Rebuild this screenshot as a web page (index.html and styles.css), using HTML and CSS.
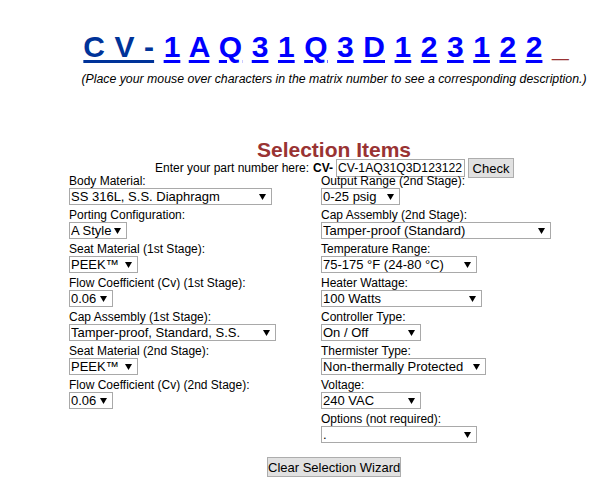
FILE: index.html
```html
<!DOCTYPE html>
<html>
<head>
<meta charset="utf-8">
<link rel="stylesheet" href="styles.css">
</head>
<body>
<div class="page">
  <div class="matrix"><a class="pre" href="#">C V -</a> <a href="#">1</a> <a href="#">A</a> <a href="#">Q</a> <a href="#">3</a> <a href="#">1</a> <a href="#">Q</a> <a href="#">3</a> <a href="#">D</a> <a href="#">1</a> <a href="#">2</a> <a href="#">3</a> <a href="#">1</a> <a href="#">2</a> <a href="#">2</a> <span class="blank">_</span></div>
  <p class="hint">(Place your mouse over characters in the matrix number to see a corresponding description.)</p>
  <h2 class="title">Selection Items</h2>
  <div class="pn">
    <span class="pn-label">Enter your part number here:</span>
    <b class="pn-pre">CV-</b>
    <input class="pn-input" type="text" value="CV-1AQ31Q3D123122">
    <button class="btn check">Check</button>
  </div>
  <div class="cols">
    <div class="col">
      <div class="field"><div class="lbl">Body Material:</div><select class="sel w202"><option>SS 316L, S.S. Diaphragm</option></select></div>
      <div class="field"><div class="lbl">Porting Configuration:</div><select class="sel w54"><option>A Style</option></select></div>
      <div class="field"><div class="lbl">Seat Material (1st Stage):</div><select class="sel w68"><option>PEEK™</option></select></div>
      <div class="field"><div class="lbl">Flow Coefficient (Cv) (1st Stage):</div><select class="sel w43"><option>0.06</option></select></div>
      <div class="field"><div class="lbl">Cap Assembly (1st Stage):</div><select class="sel w206"><option>Tamper-proof, Standard, S.S.</option></select></div>
      <div class="field"><div class="lbl">Seat Material (2nd Stage):</div><select class="sel w68"><option>PEEK™</option></select></div>
      <div class="field"><div class="lbl">Flow Coefficient (Cv) (2nd Stage):</div><select class="sel w43"><option>0.06</option></select></div>
    </div>
    <div class="col">
      <div class="field"><div class="lbl">Output Range (2nd Stage):</div><select class="sel w78"><option>0-25 psig</option></select></div>
      <div class="field"><div class="lbl">Cap Assembly (2nd Stage):</div><select class="sel w229"><option>Tamper-proof (Standard)</option></select></div>
      <div class="field"><div class="lbl">Temperature Range:</div><select class="sel w155"><option>75-175 °F (24-80 °C)</option></select></div>
      <div class="field"><div class="lbl">Heater Wattage:</div><select class="sel w160"><option>100 Watts</option></select></div>
      <div class="field"><div class="lbl">Controller Type:</div><select class="sel w99"><option>On / Off</option></select></div>
      <div class="field"><div class="lbl">Thermister Type:</div><select class="sel w164"><option>Non-thermally Protected</option></select></div>
      <div class="field"><div class="lbl">Voltage:</div><select class="sel w99"><option>240 VAC</option></select></div>
      <div class="field"><div class="lbl">Options (not required):</div><select class="sel w155"><option>.</option></select></div>
    </div>
  </div>
  <div class="clear"><button class="btn clear-btn">Clear Selection Wizard</button></div>
</div>
</body>
</html>
```

FILE: styles.css
```css
html, body {
  margin: 0;
  padding: 0;
  background: #ffffff;
  overflow: hidden;
}
body {
  font-family: "Liberation Sans", Arial, sans-serif;
  color: #000;
}
.page {
  width: 564px;
  margin: 0 0 0 52px;
  text-align: center;
}
.matrix {
  margin: 30px 0 0 0;
  padding-right: 16px;
  font-size: 30px;
  font-weight: bold;
  line-height: 34px;
  word-spacing: 1.2px;
  white-space: nowrap;
}
.matrix a {
  color: #0000ff;
  text-decoration: underline;
  text-decoration-thickness: 3px;
  text-underline-offset: 3px;
}
.matrix a.pre {
  color: #003399;
}
.matrix .blank {
  color: #993333;
}
.hint {
  margin: 8px 0 0 0;
  font-size: 12.3px;
  font-style: italic;
  line-height: 14px;
  white-space: nowrap;
}
.title {
  margin: 53px 0 0 0;
  font-size: 21px;
  line-height: 22px;
  font-weight: bold;
  color: #993333;
}
.pn {
  display: flex;
  justify-content: center;
  align-items: center;
  height: 14px;
  font-size: 12px;
  padding-left: 1px;
}
.pn-label {
  margin-right: 4px;
}
.pn-pre {
  margin-right: 3px;
}
.pn-input {
  box-sizing: border-box;
  width: 129px;
  height: 18px;
  margin: 0;
  padding: 0 1px;
  border: 1px solid #a9a9a9;
  font-family: "Liberation Sans", Arial, sans-serif;
  font-size: 12.2px;
  color: #000;
}
.btn {
  box-sizing: border-box;
  margin: 0;
  border: 1px solid #adadad;
  background: #e1e1e1;
  font-family: "Liberation Sans", Arial, sans-serif;
  font-size: 13px;
  color: #000;
  border-radius: 0;
  white-space: nowrap;
}
.check {
  width: 46px;
  height: 20px;
  margin-left: 3px;
  padding: 0;
}
.cols {
  display: grid;
  grid-template-columns: 252px 1fr;
  padding-left: 17px;
  margin-top: -1px;
  text-align: left;
}
.field {
  display: flex;
  flex-direction: column;
  align-items: flex-start;
  margin-bottom: 3px;
}
.lbl {
  font-size: 12px;
  line-height: 14px;
}
.sel {
  -webkit-appearance: none;
  appearance: none;
  box-sizing: border-box;
  height: 17px;
  margin: 0;
  padding: 0 9px 0 1px;
  border: 1px solid #a9a9a9;
  border-radius: 0;
  background: #fff url("data:image/svg+xml;utf8,<svg xmlns='http://www.w3.org/2000/svg' width='7' height='6'><path d='M0 0h7L3.5 6z' fill='black'/></svg>") no-repeat right 5px center;
  font-family: "Liberation Sans", Arial, sans-serif;
  font-size: 13px;
  line-height: 15px;
  color: #000;
}
.w43 { width: 44px; }
.w54 { width: 58px; }
.w68 { width: 69px; }
.w78 { width: 79px; }
.w99 { width: 100px; }
.w155 { width: 156px; }
.w160 { width: 161px; }
.w164 { width: 165px; }
.w202 { width: 203px; }
.w206 { width: 207px; }
.w229 { width: 230px; }
.clear {
  margin-top: 11px;
}
.clear-btn {
  width: 134px;
  height: 20px;
  padding: 0;
}
```
